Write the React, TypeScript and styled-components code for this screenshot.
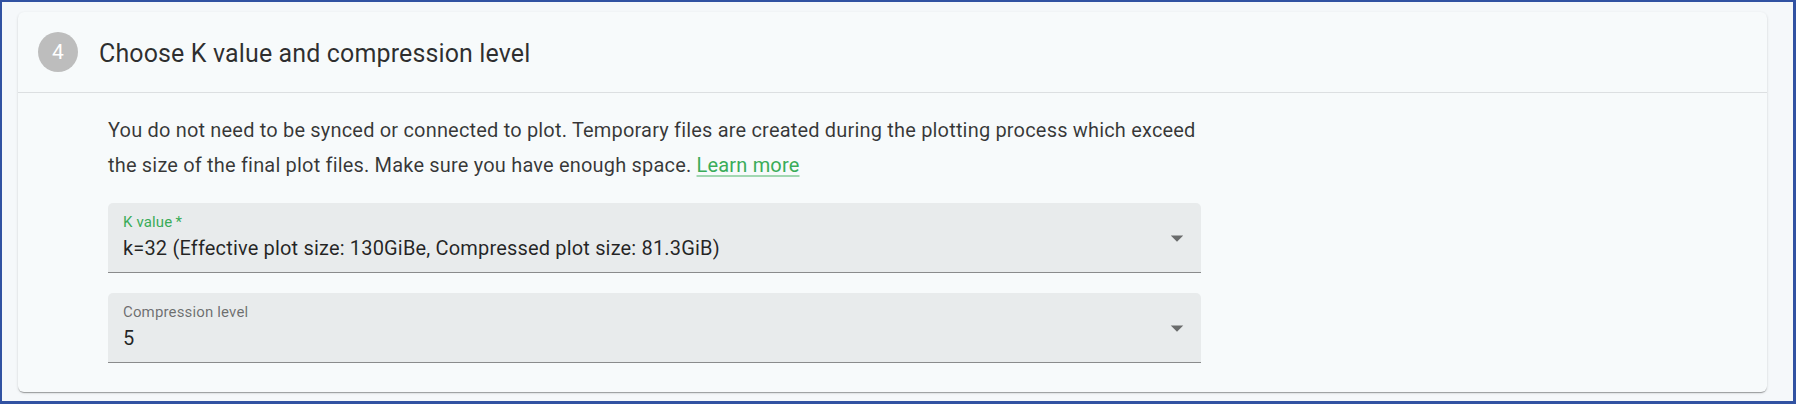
import React from "react";
import styled, { createGlobalStyle } from "styled-components";

const GlobalStyle = createGlobalStyle`
  html, body {
    margin: 0;
    padding: 0;
    background: #f4f7f9;
  }
  * { box-sizing: border-box; }
`;

const Frame = styled.div`
  width: 1796px;
  height: 404px;
  border-style: solid;
  border-color: #3152a2;
  border-width: 2px 3px 3px 2px;
  background: #f5f8fa;
  padding: 10px 26px 0 16px;
  font-family: Roboto, "Noto Sans", sans-serif;
`;

const Card = styled.section`
  background: #f7fafb;
  border-radius: 6px;
  box-shadow: 0 2px 1px -1px rgba(0, 0, 0, 0.2), 0 1px 1px 0 rgba(0, 0, 0, 0.14),
    0 1px 3px 0 rgba(0, 0, 0, 0.12);
  overflow: hidden;
`;

const Header = styled.header`
  display: flex;
  align-items: center;
  gap: 21px;
  height: 81px;
  padding: 0 20px;
  border-bottom: 1px solid #dcdfe1;
`;

const StepBadge = styled.span`
  display: flex;
  align-items: center;
  justify-content: center;
  width: 40px;
  height: 40px;
  border-radius: 50%;
  background: #bdbdbd;
  color: #ffffff;
  font-size: 21px;
  line-height: 1;
`;

const Title = styled.h2`
  margin: 0 0 0 0;
  padding-top: 2px;
  font-size: 25px;
  font-weight: 400;
  color: rgba(0, 0, 0, 0.82);
  letter-spacing: 0.13px;
`;

const Body = styled.div`
  padding: 20px 0 29px 90px;
`;

const Content = styled.div`
  width: 1093px;
  display: flex;
  flex-direction: column;
  gap: 20px;
`;

const Paragraph = styled.p`
  margin: 0;
  font-size: 20px;
  line-height: 35px;
  letter-spacing: 0.18px;
  color: rgba(0, 0, 0, 0.78);
`;

const Link = styled.a`
  color: #3aac59;
  text-decoration: underline;
  text-decoration-color: rgba(58, 172, 89, 0.45);
  text-underline-offset: 3px;
  cursor: pointer;
`;

const Field = styled.div`
  display: flex;
  align-items: center;
  height: 70px;
  padding: 0 9px 0 15px;
  background: #e8ebec;
  border-radius: 5px 5px 0 0;
  border-bottom: 1px solid #8a8b8c;
`;

const FieldText = styled.div`
  flex: 1;
  display: flex;
  flex-direction: column;
  align-self: flex-start;
  padding-top: 9px;
`;

const Label = styled.span<{ $active?: boolean }>`
  font-size: 15px;
  line-height: 21px;
  height: 21px;
  letter-spacing: 0.15px;
  color: ${(p) => (p.$active ? "#3aac59" : "rgba(0, 0, 0, 0.55)")};
`;

const Required = styled.span`
  margin-left: 3px;
`;

const Value = styled.span`
  margin-top: 1px;
  font-size: 20px;
  line-height: 29px;
  letter-spacing: 0.17px;
  color: rgba(0, 0, 0, 0.85);
`;

const Arrow = styled.svg`
  width: 30px;
  height: 30px;
  fill: rgba(0, 0, 0, 0.54);
  flex: none;
`;

const DropIcon = () => (
  <Arrow viewBox="0 0 24 24" aria-hidden="true">
    <path d="M7 10l5 5 5-5z" />
  </Arrow>
);

type SelectProps = { label: string; value: string; active?: boolean; required?: boolean };

const SelectField = ({ label, value, active, required }: SelectProps) => (
  <Field>
    <FieldText>
      <Label $active={active}>
        {label}
        {required && <Required>*</Required>}
      </Label>
      <Value>{value}</Value>
    </FieldText>
    <DropIcon />
  </Field>
);

export default function App() {
  return (
    <>
      <GlobalStyle />
      <Frame>
        <Card>
          <Header>
            <StepBadge>4</StepBadge>
            <Title>Choose K value and compression level</Title>
          </Header>
          <Body>
            <Content>
              <Paragraph>
                You do not need to be synced or connected to plot. Temporary files are created
                during the plotting process which exceed the size of the final plot files. Make
                sure you have enough space. <Link>Learn more</Link>
              </Paragraph>
              <SelectField
                label="K value"
                value="k=32 (Effective plot size: 130GiBe, Compressed plot size: 81.3GiB)"
                active
                required
              />
              <SelectField label="Compression level" value="5" />
            </Content>
          </Body>
        </Card>
      </Frame>
    </>
  );
}
